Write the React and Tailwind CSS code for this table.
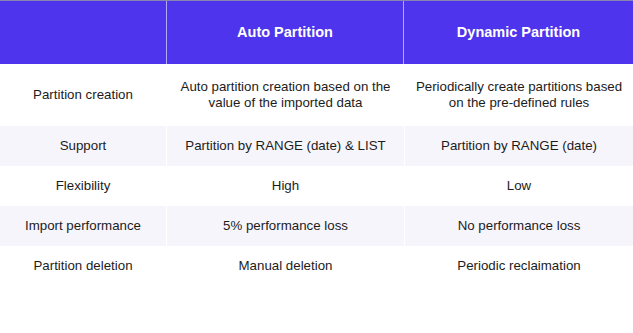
export default function App() {
  const rows = [
    ["Partition creation", ["Auto partition creation based on the", "value of the imported data"], ["Periodically create partitions based", "on the pre-defined rules"]],
    ["Support", ["Partition by RANGE (date) & LIST"], ["Partition by RANGE (date)"]],
    ["Flexibility", ["High"], ["Low"]],
    ["Import performance", ["5% performance loss"], ["No performance loss"]],
    ["Partition deletion", ["Manual deletion"], ["Periodic reclaimation"]],
  ];
  return (
    <div className="w-[633px] h-[333px] bg-white overflow-hidden" style={{ fontFamily: '"Liberation Sans", Arial, sans-serif' }}>
      <div className="flex h-[64px] bg-[#4e34ed] border-t border-[#8a84b0]">
        <div className="w-[167px] border-r border-[#b3a9f6]" />
        <div className="w-[237px] flex items-center justify-center text-white font-bold text-[14.5px] border-r border-[#b3a9f6]">Auto Partition</div>
        <div className="flex-1 flex items-center justify-center text-white font-bold text-[14.5px]">Dynamic Partition</div>
      </div>
      {rows.map((r, i) => {
        const shaded = i % 2 === 1;
        const bg = shaded ? "bg-[#f6f5fc]" : "bg-white";
        const h = i === 0 ? "h-[62px]" : "h-[40px]";
        return (
          <div key={i} className={`flex gap-px ${h}`}>
            <div className={`w-[166px] ${bg} flex items-center justify-center text-[13.3px] text-[#1c1c1c] leading-[16px] text-center`}>{r[0]}</div>
            <div className={`w-[237px] ${bg} flex flex-col items-center justify-center text-[13.3px] text-[#1c1c1c] leading-[16px] text-center`}>
              {r[1].map((t, j) => <div key={j}>{t}</div>)}
            </div>
            <div className={`flex-1 ${bg} flex flex-col items-center justify-center text-[13.3px] text-[#1c1c1c] leading-[16px] text-center`}>
              {r[2].map((t, j) => <div key={j}>{t}</div>)}
            </div>
          </div>
        );
      })}
    </div>
  );
}
